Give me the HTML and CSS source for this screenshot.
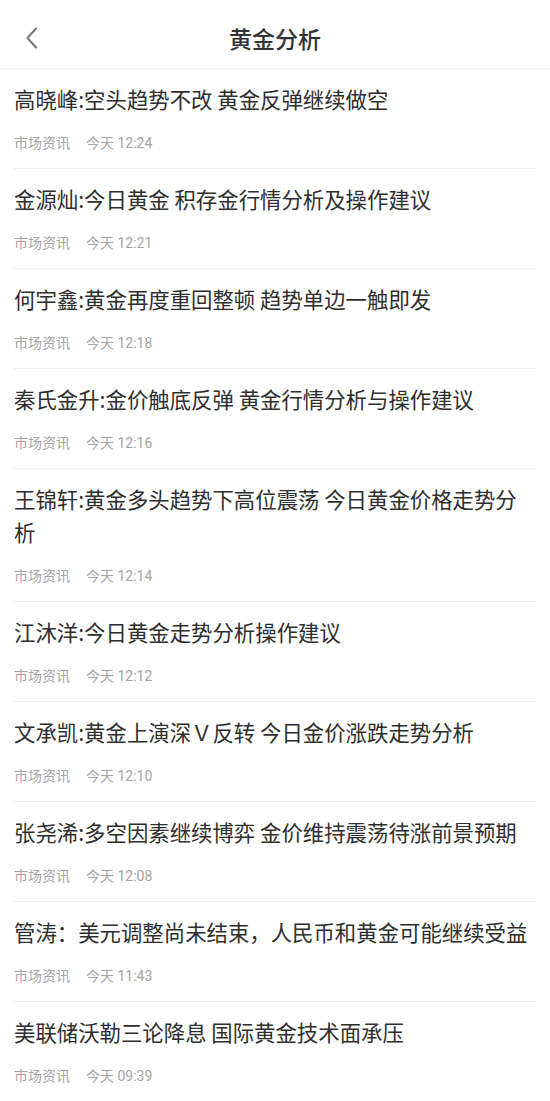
FILE: index.html
```html
<!DOCTYPE html>
<html lang="zh-CN">
<head>
<meta charset="utf-8">
<title>黄金分析</title>
<link rel="stylesheet" href="styles.css">
</head>
<body>
<header class="topbar">
  <button class="back" aria-label="返回">
    <svg width="14" height="22" viewBox="0 0 14 22"><path d="M11 1.5 L2.5 11 L11 20.5" fill="none" stroke="#777" stroke-width="2" stroke-linecap="round" stroke-linejoin="round"/></svg>
  </button>
  <h1 class="title">黄金分析</h1>
</header>
<ul class="list">
  <li class="item"><p class="headline">高晓峰:空头趋势不改 黄金反弹继续做空</p><div class="meta"><span>市场资讯</span><span>今天 12:24</span></div></li>
  <li class="item"><p class="headline">金源灿:今日黄金 积存金行情分析及操作建议</p><div class="meta"><span>市场资讯</span><span>今天 12:21</span></div></li>
  <li class="item"><p class="headline">何宇鑫:黄金再度重回整顿 趋势单边一触即发</p><div class="meta"><span>市场资讯</span><span>今天 12:18</span></div></li>
  <li class="item"><p class="headline">秦氏金升:金价触底反弹 黄金行情分析与操作建议</p><div class="meta"><span>市场资讯</span><span>今天 12:16</span></div></li>
  <li class="item"><p class="headline">王锦轩:黄金多头趋势下高位震荡 今日黄金价格走势分析</p><div class="meta"><span>市场资讯</span><span>今天 12:14</span></div></li>
  <li class="item"><p class="headline">江沐洋:今日黄金走势分析操作建议</p><div class="meta"><span>市场资讯</span><span>今天 12:12</span></div></li>
  <li class="item"><p class="headline">文承凯:黄金上演深Ｖ反转 今日金价涨跌走势分析</p><div class="meta"><span>市场资讯</span><span>今天 12:10</span></div></li>
  <li class="item"><p class="headline">张尧浠:多空因素继续博弈 金价维持震荡待涨前景预期</p><div class="meta"><span>市场资讯</span><span>今天 12:08</span></div></li>
  <li class="item"><p class="headline">管涛：美元调整尚未结束，人民币和黄金可能继续受益</p><div class="meta"><span>市场资讯</span><span>今天 11:43</span></div></li>
  <li class="item"><p class="headline">美联储沃勒三论降息 国际黄金技术面承压</p><div class="meta"><span>市场资讯</span><span>今天 09:39</span></div></li>
</ul>
</body>
</html>
```

FILE: styles.css
```css
* { box-sizing: border-box; }
html, body {
  margin: 0;
  padding: 0;
  background: #fff;
  font-family: "Noto Sans CJK SC", "Noto Sans", "Liberation Sans", sans-serif;
  color: #333;
}
.topbar {
  height: 69px;
  border-bottom: 1px solid #eeeeee;
  display: flex;
  align-items: center;
  justify-content: center;
  position: relative;
}
.back {
  position: absolute;
  left: 20px;
  top: 26px;
  width: 24px;
  height: 24px;
  padding: 0;
  border: 0;
  background: none;
  display: flex;
  align-items: center;
  justify-content: center;
}
.title {
  margin: 0;
  font-size: 23px;
  font-weight: 500;
  color: #333;
  line-height: 32px;
  padding-top: 8px;
}
.list {
  list-style: none;
  margin: 0;
  padding: 0 13px 0 14px;
}
.item {
  padding: 13px 0 15px;
  border-bottom: 1px solid #eeeeee;
}
.headline {
  margin: 0;
  font-size: 21.4px;
  line-height: 33px;
  color: #2e2e2e;
  padding-right: 6px;
}
.meta {
  margin-top: 18px;
  font-family: Roboto, "Noto Sans CJK SC", sans-serif;
  font-size: 14px;
  line-height: 20px;
  color: #a3a3a3;
  display: flex;
  gap: 16px;
}
```
